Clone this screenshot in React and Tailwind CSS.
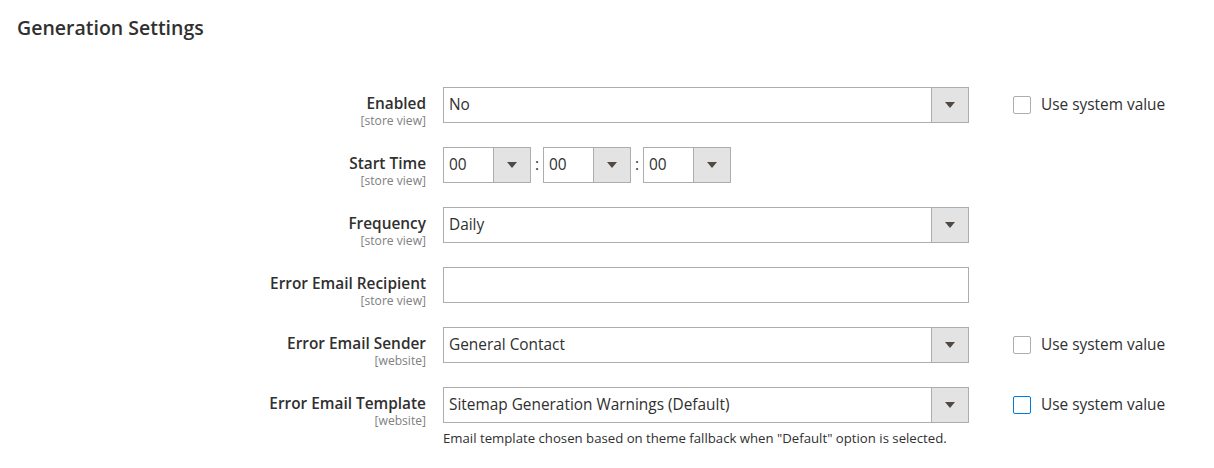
import React from 'react'

const Arrow = () => (
    <svg width="10" height="6" viewBox="0 0 10 6" className="block">
        <path d="M0 0 L10 0 L5 6 Z" fill="#514943" />
    </svg>
)

const Select = ({ value, className = 'w-[526px]' }) => (
    <div className={`${className} h-[36px] flex border border-[#adadad] bg-white`}>
        <div className="flex-1 flex items-center pl-[5px] text-[15.4px] text-[#303030] truncate">{value}</div>
        <div className="w-[37px] h-full flex items-center justify-center bg-[#e3e3e3] border-l border-[#adadad]">
            <Arrow />
        </div>
    </div>
)

const SystemValue = ({ focused }) => (
    <label className="flex items-center gap-[10px] text-[15.4px] text-[#303030] h-[36px]">
        <span
            className={`w-[18px] h-[18px] rounded-[2px] bg-white border ${focused ? 'border-[#007bdb]' : 'border-[#adadad]'}`}
        />
        Use system value
    </label>
)

const Row = ({ label, scope, children, system, focused, note }) => (
    <div className="flex items-start">
        <div className="w-[426px] h-[36px] text-right pt-[7px]">
            <div className="text-[15.4px] font-semibold leading-[20px] text-[#303030]">{label}</div>
            <div className="text-[12.1px] leading-[14px] text-[#808080]">[{scope}]</div>
        </div>
        <div className="w-[526px] ml-[17px]">
            {children}
            {note && (
                <div className="mt-[7px] text-[13.2px] leading-[17px] text-[#303030]">{note}</div>
            )}
        </div>
        <div className="ml-[44px]">
            {system && <SystemValue focused={focused} />}
        </div>
    </div>
)

export default function App() {
    return (
        <div className="w-[1214px] h-[468px] bg-white font-['Open_Sans',sans-serif] overflow-hidden">
            <h2 className="pl-[17px] pt-[15px] text-[19.5px] leading-[26px] font-semibold text-[#303030]">
                Generation Settings
            </h2>

            <div className="mt-[46px] flex flex-col gap-[24px]">
                <Row label="Enabled" scope="store view" system>
                    <Select value="No" />
                </Row>

                <Row label="Start Time" scope="store view">
                    <div className="flex items-center">
                        <Select value="00" className="w-[88px]" />
                        <span className="w-[12px] text-center text-[15.4px] text-[#303030]">:</span>
                        <Select value="00" className="w-[88px]" />
                        <span className="w-[12px] text-center text-[15.4px] text-[#303030]">:</span>
                        <Select value="00" className="w-[88px]" />
                    </div>
                </Row>

                <Row label="Frequency" scope="store view">
                    <Select value="Daily" />
                </Row>

                <Row label="Error Email Recipient" scope="store view">
                    <div className="h-[36px] border border-[#adadad] bg-white" />
                </Row>

                <Row label="Error Email Sender" scope="website" system>
                    <Select value="General Contact" />
                </Row>

                <Row
                    label="Error Email Template"
                    scope="website"
                    system
                    focused
                    note={'Email template chosen based on theme fallback when "Default" option is selected.'}
                >
                    <Select value="Sitemap Generation Warnings (Default)" />
                </Row>
            </div>
        </div>
    )
}
